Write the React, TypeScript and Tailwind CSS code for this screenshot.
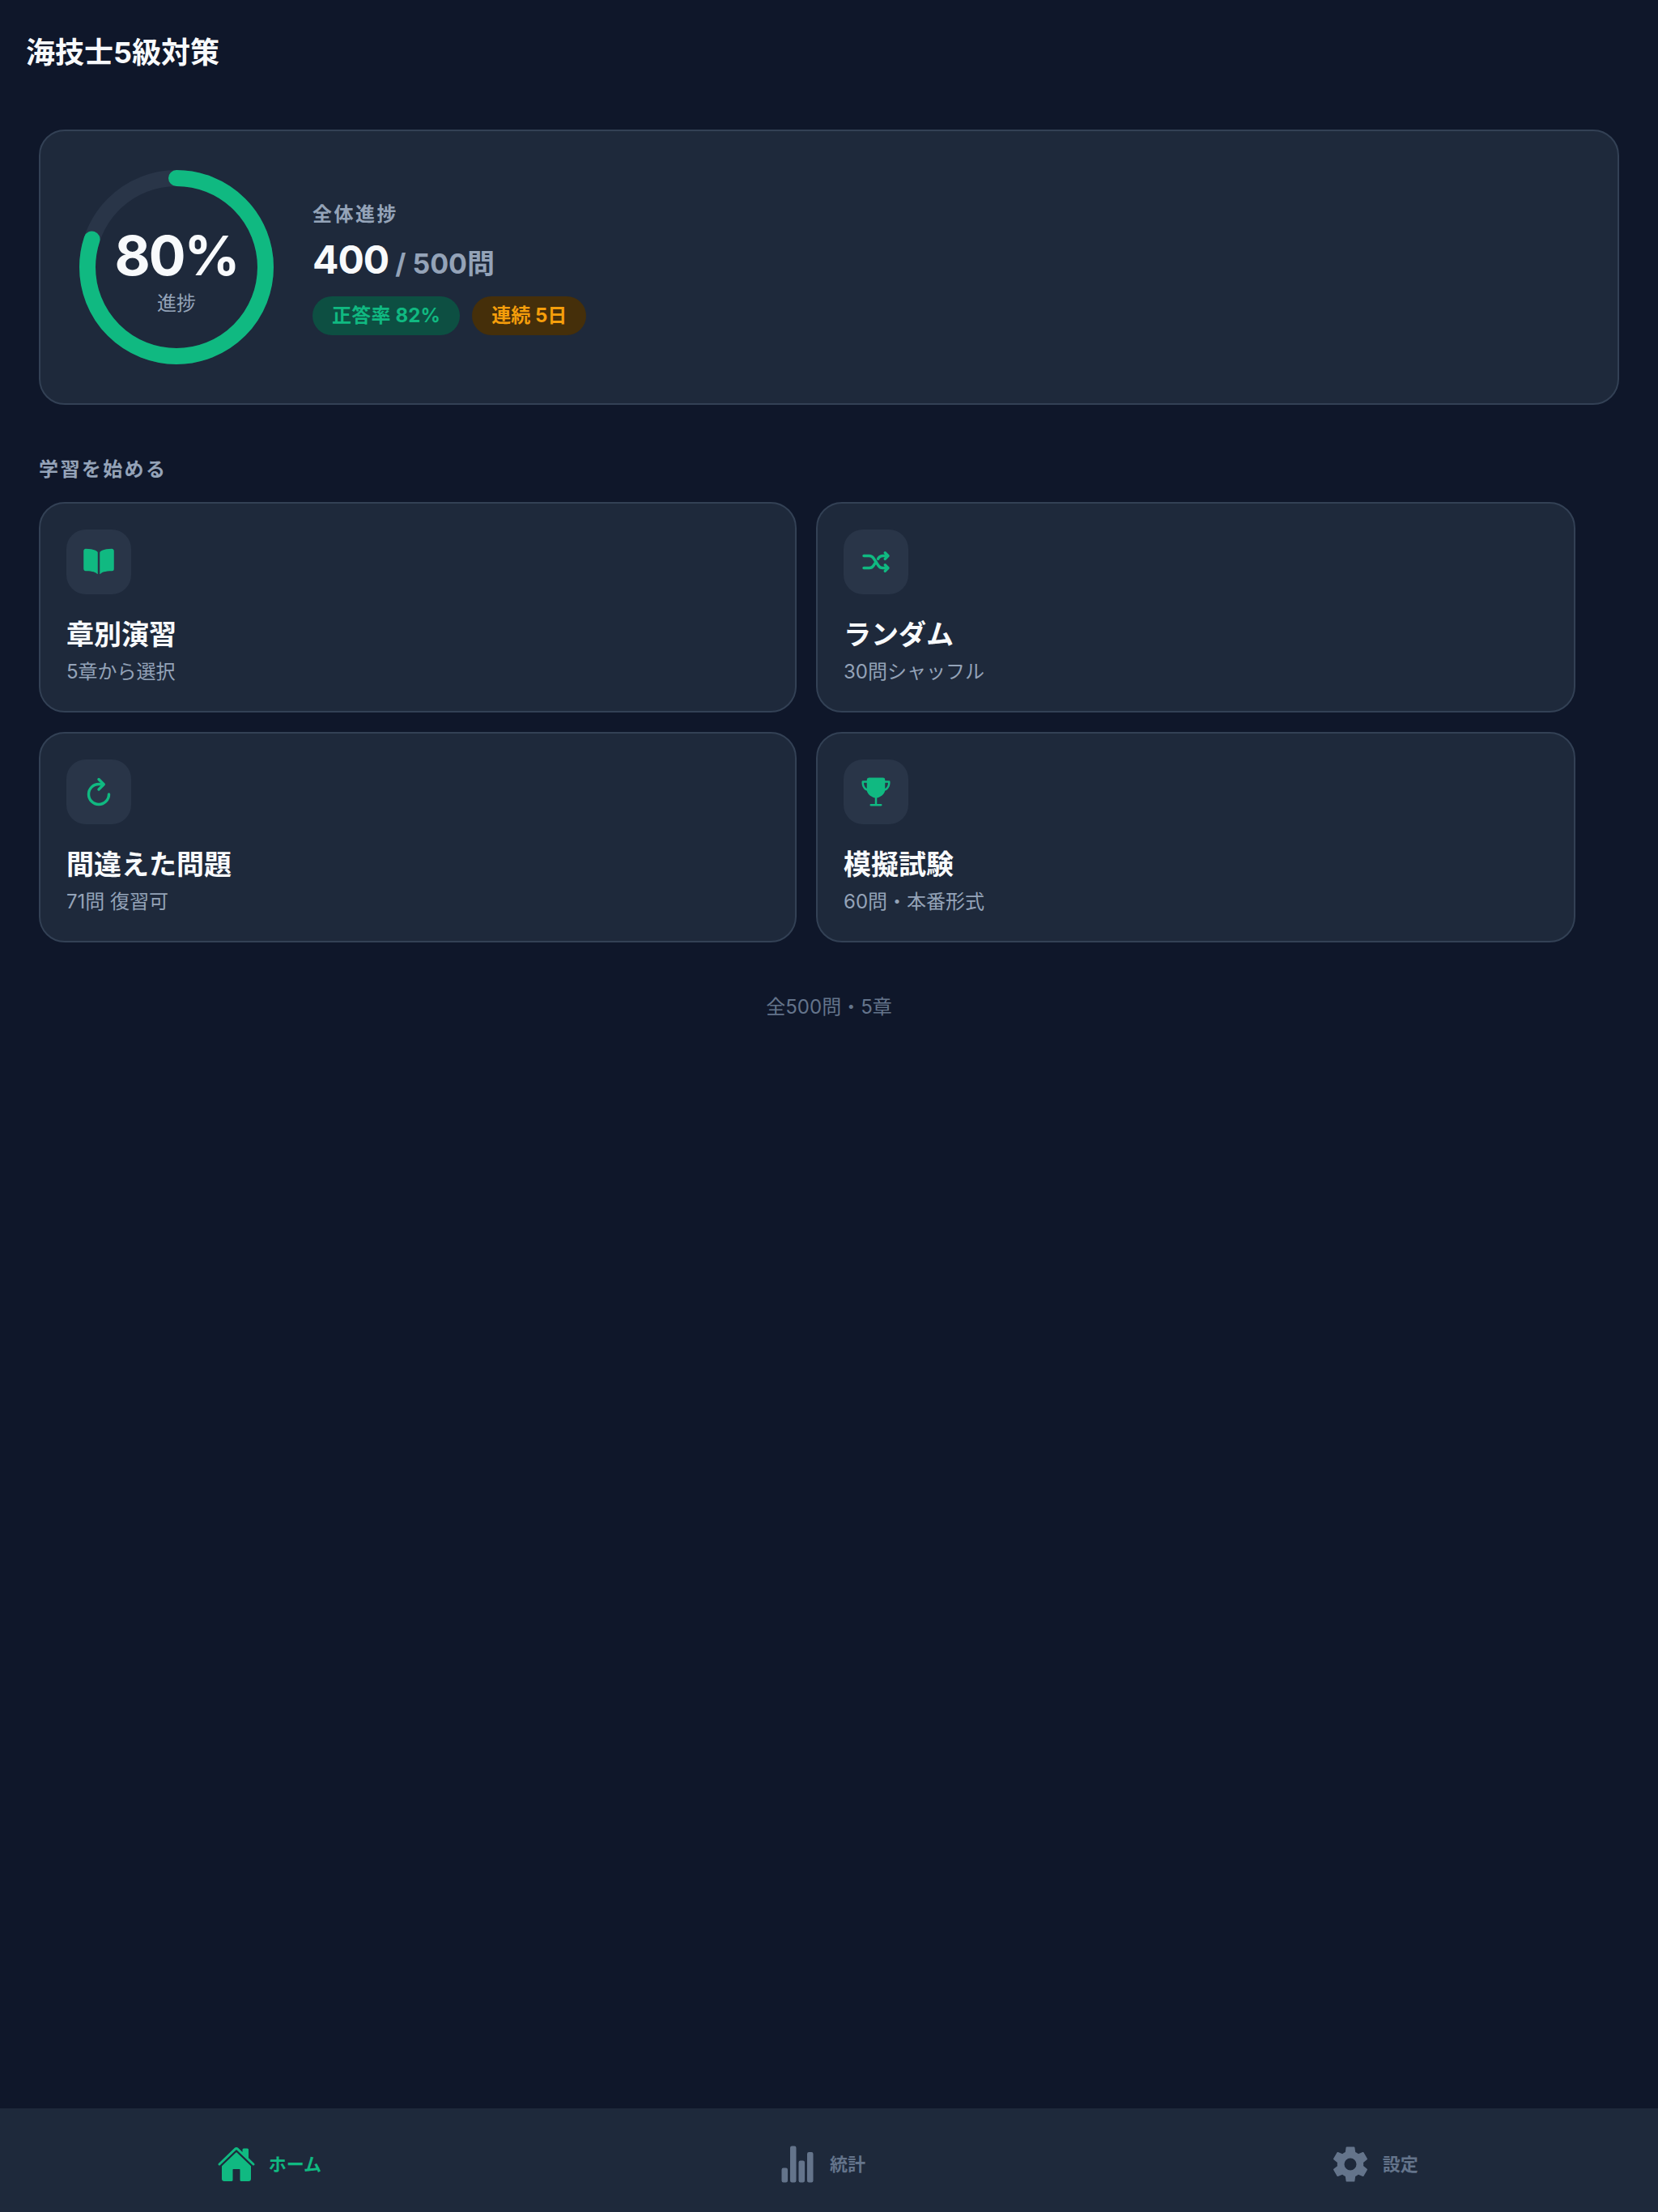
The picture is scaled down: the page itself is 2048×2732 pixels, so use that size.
import { IoBook, IoHome, IoRefresh, IoSettingsSharp, IoShuffle, IoStatsChart, IoTrophy } from 'react-icons/io5';
import type { ReactNode } from 'react';

const font = "font-['Inter','Noto_Sans_CJK_JP',sans-serif]";
// the line icons read a bit heavier in the reference
const heavy = '[&_path]:[stroke-width:44] [&_polyline]:[stroke-width:44]';

function Ring() {
  const r = 110;
  const c = 2 * Math.PI * r;
  return (
    <div className="relative h-[240px] w-[240px] shrink-0">
      <svg width="240" height="240" viewBox="0 0 240 240" className="-rotate-90">
        <circle cx="120" cy="120" r={r} fill="none" stroke="#293548" strokeWidth="20" />
        <circle
          cx="120"
          cy="120"
          r={r}
          fill="none"
          stroke="#10b981"
          strokeWidth="20"
          strokeLinecap="round"
          strokeDasharray={`${c * 0.8} ${c}`}
        />
      </svg>
      <div className="absolute inset-0 flex flex-col items-center justify-center">
        <span className="mt-[3px] text-[68px] leading-[84px] font-bold tracking-[-2px] text-[#f8fafc]">80%</span>
        <span className="mt-[2px] text-[24px] leading-[32px] text-[#94a3b8]">進捗</span>
      </div>
    </div>
  );
}

function MenuCard({ icon, title, sub }: { icon: ReactNode; title: string; sub: string }) {
  return (
    <div className="h-[260px] rounded-[32px] border-2 border-[#334155] bg-[#1e293b] p-[32px]">
      <div className="flex h-[80px] w-[80px] items-center justify-center rounded-[24px] bg-[#293548] text-[40px] text-[#10b981]">
        {icon}
      </div>
      <div className="mt-[28px] text-[34px] leading-[44px] font-bold text-[#f8fafc]">{title}</div>
      <div className="mt-[7px] text-[24px] leading-[34px] text-[#94a3b8]">{sub}</div>
    </div>
  );
}

function NavItem({ icon, label, active }: { icon: ReactNode; label: string; active?: boolean }) {
  return (
    <div className={`flex items-center justify-center gap-[16px] pt-[10px] pr-[18px] ${active ? 'text-[#10b981]' : 'text-[#64748b]'}`}>
      <span className="text-[48px]">{icon}</span>
      <span className="text-[22px] font-bold">{label}</span>
    </div>
  );
}

export default function App() {
  return (
    <div className={`flex h-[2732px] w-[2048px] flex-col bg-[#0f172a] ${font}`}>
      <header className="flex h-[128px] shrink-0 items-center px-[32px] pt-[2px]">
        <h1 className="text-[36px] font-bold text-[#f8fafc]">海技士5級対策</h1>
      </header>

      <main className="flex-1 pt-[32px] pl-[48px]">
        <section className="flex h-[340px] w-[1952px] items-center gap-[48px] rounded-[32px] border-2 border-[#334155] bg-[#1e293b] pl-[48px]">
          <Ring />
          <div className="pt-[2px]">
            <div className="text-[24px] leading-[32px] font-bold tracking-[2.5px] text-[#94a3b8]">全体進捗</div>
            <div className="mt-[6px] flex items-baseline gap-[8px]">
              <span className="text-[48px] leading-[68px] font-bold tracking-[-1px] text-[#f8fafc]">400</span>
              <span className="text-[34px] font-bold text-[#94a3b8]">/ 500問</span>
            </div>
            <div className="mt-[11px] flex gap-[15px]">
              <span className="flex h-[48px] items-center rounded-full bg-[#065f46]/70 px-[24px] text-[24px] font-bold tracking-[0.2px] text-[#10b981]">
                正答率 82%
              </span>
              <span className="flex h-[48px] items-center rounded-full bg-[#452f0a] px-[24px] text-[24px] font-bold text-[#f59e0b]">
                連続 5日
              </span>
            </div>
          </div>
        </section>

        <h2 className="mt-[64px] text-[24px] leading-[32px] font-bold tracking-[2.4px] text-[#94a3b8]">学習を始める</h2>

        <div className="mt-[24px] grid w-[1898px] grid-cols-[936px_938px] gap-x-[24px] gap-y-[24px]">
          <MenuCard icon={<IoBook />} title="章別演習" sub="5章から選択" />
          <MenuCard icon={<IoShuffle className={heavy} />} title="ランダム" sub="30問シャッフル" />
          <MenuCard icon={<IoRefresh className={heavy} />} title="間違えた問題" sub="71問 復習可" />
          <MenuCard icon={<IoTrophy />} title="模擬試験" sub="60問・本番形式" />
        </div>

        <p className="mt-[64px] pr-[48px] text-center text-[24px] leading-[32px] text-[#64748b]">全500問・5章</p>
      </main>

      <nav className="grid h-[128px] shrink-0 grid-cols-3 bg-[#1e293b]">
        <NavItem icon={<IoHome />} label="ホーム" active />
        <NavItem icon={<IoStatsChart />} label="統計" />
        <NavItem icon={<IoSettingsSharp />} label="設定" />
      </nav>
    </div>
  );
}
